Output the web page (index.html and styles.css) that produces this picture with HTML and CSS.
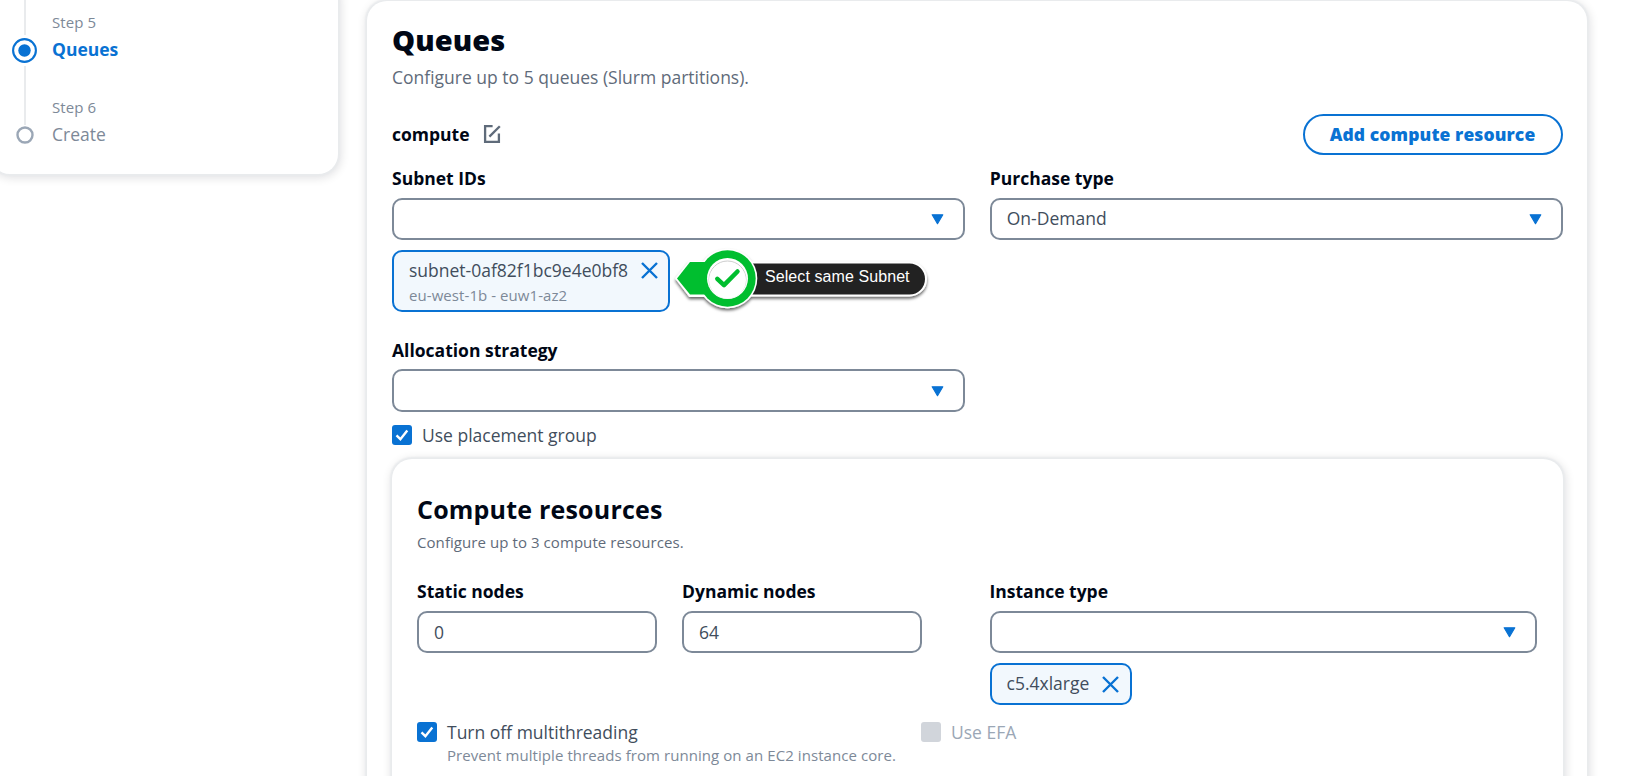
FILE: index.html
```html
<!DOCTYPE html>
<html lang="en">
<head>
<meta charset="utf-8">
<title>Queues</title>
<link rel="stylesheet" href="styles.css">
</head>
<body>
<div class="layout">
  <nav class="steps card">
    <div class="step step-active">
      <div class="rail"><span class="line line-top"></span>
        <svg class="dot-active" viewBox="0 0 25 25"><circle cx="12.5" cy="12.5" r="11.4" fill="none" stroke="#0972d3" stroke-width="2.1"/><circle cx="12.5" cy="12.5" r="6.2" fill="#0972d3"/></svg>
        <span class="line line-mid"></span></div>
      <div class="step-text"><small>Step 5</small><b>Queues</b></div>
    </div>
    <div class="step">
      <div class="rail"><svg class="dot" viewBox="0 0 18 18"><circle cx="9" cy="9" r="7.5" fill="none" stroke="#9ba7b6" stroke-width="2.4"/></svg></div>
      <div class="step-text"><small>Step 6</small><span>Create</span></div>
    </div>
  </nav>

  <main class="card queues">
    <h1>Queues</h1>
    <p class="lead">Configure up to 5 queues (Slurm partitions).</p>

    <div class="queue-head">
      <div class="queue-name">compute
        <svg class="edit" viewBox="0 0 18 20"><path d="M9.6 2.2H2.1v15.6h13.8V9.6" fill="none" stroke="#5f6b7a" stroke-width="2.3"/><path d="M16.8 2.2 6.4 12.6" fill="none" stroke="#5f6b7a" stroke-width="2.3"/></svg>
      </div>
      <button class="add">Add compute resource</button>
    </div>

    <div class="two-col">
      <section>
        <label>Subnet IDs</label>
        <div class="field"><span></span><svg class="caret" viewBox="0 0 13 11"><path d="M1.2.8h10.6L6.5 9.7z" fill="#0972d3" stroke="#0972d3" stroke-width="1.2" stroke-linejoin="round"/></svg></div>
        <div class="token-row">
          <div class="token token-tall">
            <div><span class="token-name">subnet-0af82f1bc9e4e0bf8</span><small>eu-west-1b - euw1-az2</small></div>
            <svg class="x" viewBox="0 0 17 17"><path d="M1 1l15 15M16 1 1 16" stroke="#0972d3" stroke-width="2.4" fill="none"/></svg>
          </div>
          <div class="callout">
            <svg viewBox="0 0 270 80">
              <defs>
                <filter id="shadow" x="-10%" y="-20%" width="120%" height="150%"><feDropShadow dx="0" dy="2.2" stdDeviation="1.6" flood-color="#000" flood-opacity=".6"/></filter>
              </defs>
              <g filter="url(#shadow)">
                <path d="M70 23.5H239.500a16.5 16.5 0 0 1 0 33H70z" fill="#222" stroke="#fff" stroke-width="2"/>
                <path d="M7 39.5 20 23.500h25v33H20z" fill="#fff" stroke="#fff" stroke-width="3"/>
                <circle cx="57.5" cy="39.5" r="29.8" fill="#fff"/>
              </g>
              <path d="M7 39.5 20 23h25v32.500H20z" fill="#00be2f"/>
              <circle cx="57.5" cy="39.5" r="28.2" fill="#00be2f"/>
              <circle cx="57.5" cy="39.5" r="20.5" fill="#fff"/>
              <circle cx="57.5" cy="40.5" r="18.5" fill="none" stroke="#ccc" stroke-width="1"/>
              <circle cx="57.5" cy="41.3" r="18.400" fill="#fff"/>
              <path d="M47.3 39.8 54 46.2 67.5 32.5" fill="none" stroke="#00be2f" stroke-width="4.5" stroke-linecap="round" stroke-linejoin="round"/>
            </svg>
            <span>Select same Subnet</span>
          </div>
        </div>
        <label class="allocation">Allocation strategy</label>
        <div class="field field-alloc"><span></span><svg class="caret" viewBox="0 0 13 11"><path d="M1.2.8h10.6L6.5 9.7z" fill="#0972d3" stroke="#0972d3" stroke-width="1.2" stroke-linejoin="round"/></svg></div>
      </section>
      <section>
        <label>Purchase type</label>
        <div class="field"><span>On-Demand</span><svg class="caret" viewBox="0 0 13 11"><path d="M1.2.8h10.6L6.5 9.7z" fill="#0972d3" stroke="#0972d3" stroke-width="1.2" stroke-linejoin="round"/></svg></div>
      </section>
    </div>

    <div class="check placement">
      <svg class="box" viewBox="0 0 20 20"><rect width="20" height="20" rx="3" fill="#0972d3"/><path d="M4.5 10.4 8.4 14.2 15.3 5.6" fill="none" stroke="#fff" stroke-width="2.4"/></svg>
      <span>Use placement group</span>
    </div>

    <div class="card resources">
      <h2>Compute resources</h2>
      <p class="sub">Configure up to 3 compute resources.</p>
      <div class="resource-grid">
        <section><label>Static nodes</label><div class="field">0</div></section>
        <section><label>Dynamic nodes</label><div class="field">64</div></section>
        <section class="instance"><label>Instance type</label>
          <div class="field"><span></span><svg class="caret" viewBox="0 0 13 11"><path d="M1.2.8h10.6L6.5 9.7z" fill="#0972d3" stroke="#0972d3" stroke-width="1.2" stroke-linejoin="round"/></svg></div>
          <div class="token token-short"><span class="token-name">c5.4xlarge</span>
            <svg class="x" viewBox="0 0 17 17"><path d="M1 1l15 15M16 1 1 16" stroke="#0972d3" stroke-width="2.4" fill="none"/></svg></div>
        </section>
      </div>
      <div class="options">
        <div class="check option-main">
          <svg class="box" viewBox="0 0 20 20"><rect width="20" height="20" rx="3" fill="#0972d3"/><path d="M4.5 10.4 8.4 14.2 15.3 5.6" fill="none" stroke="#fff" stroke-width="2.4"/></svg>
          <div><span>Turn off multithreading</span><small>Prevent multiple threads from running on an EC2 instance core.</small></div>
        </div>
        <div class="check disabled">
          <svg class="box" viewBox="0 0 20 20"><rect width="20" height="20" rx="3" fill="#d1d5db"/></svg>
          <span>Use EFA</span>
        </div>
      </div>
    </div>
  </main>
</div>
</body>
</html>
```
FILE: styles.css
```css
* { box-sizing: border-box; }
body {
  margin: 0;
  height: 776px;
  overflow: hidden;
  background: #fff;
  color: #414d5c;
  font: 17.5px/25px "Open Sans", "Noto Sans", sans-serif;
}
h1, h2, p { margin: 0; }
small { display: block; font-size: 15px; line-height: 20px; letter-spacing: .07px; color: #7d8998; }
label { display: block; font-weight: 700; color: #000716; }
.layout { display: flex; align-items: flex-start; height: 776px; overflow: hidden; }
.card {
  background: #fff;
  border-radius: 20px;
  box-shadow: 0 0 1.5px 1.5px #e9ebed, 1px 2px 10px 2px rgba(0, 7, 22, .12);
}

.steps { flex: none; width: 348px; height: 193.5px; margin: -20px 0 0 -10px; padding: 20px 0 0 22px; }
.step { display: flex; height: 85px; }
.rail { width: 25px; display: flex; flex-direction: column; align-items: center; }
.line { flex: none; width: 2px; background: #e9ebed; }
.line-top { height: 35px; }
.line-mid { height: 59px; margin-top: 3px; }
.dot-active { width: 25px; height: 25px; margin-top: 2.5px; flex: none; }
.dot { width: 18px; height: 18px; margin-top: 41px; }
.step-text { padding: 11px 0 0 15px; color: #7d8998; }
.step-text small { line-height: 23px; }
.step-text b, .step-text span { display: block; line-height: 30px; }
.step-text b { color: #0972d3; }

.queues { flex: none; width: 1220px; height: 830px; margin: 1px 0 0 29px; padding: 19px 24.5px 0 25px; }
h1 { font-size: 29px; line-height: 40px; font-weight: 800; letter-spacing: .1px; color: #000716; }
.lead { margin-top: 5px; color: #5f6b7a; }
.queue-head { display: flex; justify-content: space-between; align-items: center; margin-top: 23px; height: 42px; }
.queue-name { display: flex; align-items: center; gap: 13px; font-weight: 700; color: #000716; }
.edit { width: 18px; height: 20px; }
.add {
  width: 260px; height: 41px; padding: 0;
  border: 2px solid #0972d3; border-radius: 21px;
  background: #fff; color: #0972d3;
  font: 800 17.5px/25px "Open Sans", sans-serif;
  letter-spacing: .1px;
}
.two-col { display: grid; grid-template-columns: 1fr 1fr; gap: 25px; margin-top: 10.5px; }
.field {
  display: flex; align-items: center; justify-content: space-between;
  height: 42px; margin-top: 7px; padding: 0 19px 0 15px;
  border: 2px solid #7d8998; border-radius: 10px;
  background: #fff;
}
.caret { width: 13px; height: 11px; margin-top: 1px; }
.token-row { display: flex; align-items: flex-start; height: 62px; margin-top: 10px; }
.token { display: flex; border: 2px solid #0972d3; border-radius: 10px; background: #f2f8fd; }
.token-tall { flex: none; width: 278px; height: 62px; padding: 6px 10px 0 15px; justify-content: space-between; }
.token-name { display: block; }
.token-tall small { margin-top: 2px; }
.x { width: 17px; height: 17px; flex: none; margin-top: 4.5px; }
.callout { position: relative; flex: none; width: 270px; height: 80px; }
.callout svg { display: block; width: 270px; height: 80px; margin-top: -11px; }
.callout span {
  position: absolute; left: 95px; top: 14px;
  font: 16px/25px "Liberation Sans", sans-serif;
  letter-spacing: .08px;
  color: #fff; white-space: nowrap;
}
.allocation { margin-top: 26.5px; }
.field-alloc { height: 43px; margin-top: 6px; }
.check { display: flex; gap: 10px; }
.box { width: 20px; height: 20px; flex: none; margin-top: 2px; }
.placement { margin-top: 11px; }
.check span { display: block; }

.resources { margin-top: 11px; height: 360px; padding: 34.5px 25px 0; }
h2 { font-size: 25px; line-height: 30px; font-weight: 700; letter-spacing: .2px; color: #000716; }
.sub { margin-top: 8px; font-size: 15px; line-height: 20px; letter-spacing: .07px; color: #5f6b7a; }
.resource-grid { display: grid; grid-template-columns: 240px 240px 547.5px; column-gap: 25px; margin-top: 27.5px; }
.instance { margin-left: 42.5px; width: 547.5px; }
.token-short { width: 142.5px; height: 42px; margin-top: 10px; padding: 6px 11px 0 15px; justify-content: space-between; }
.options { display: flex; margin-top: 14.5px; }
.option-main { width: 504px; flex: none; }
.disabled { color: #9ba7b6; }
```
